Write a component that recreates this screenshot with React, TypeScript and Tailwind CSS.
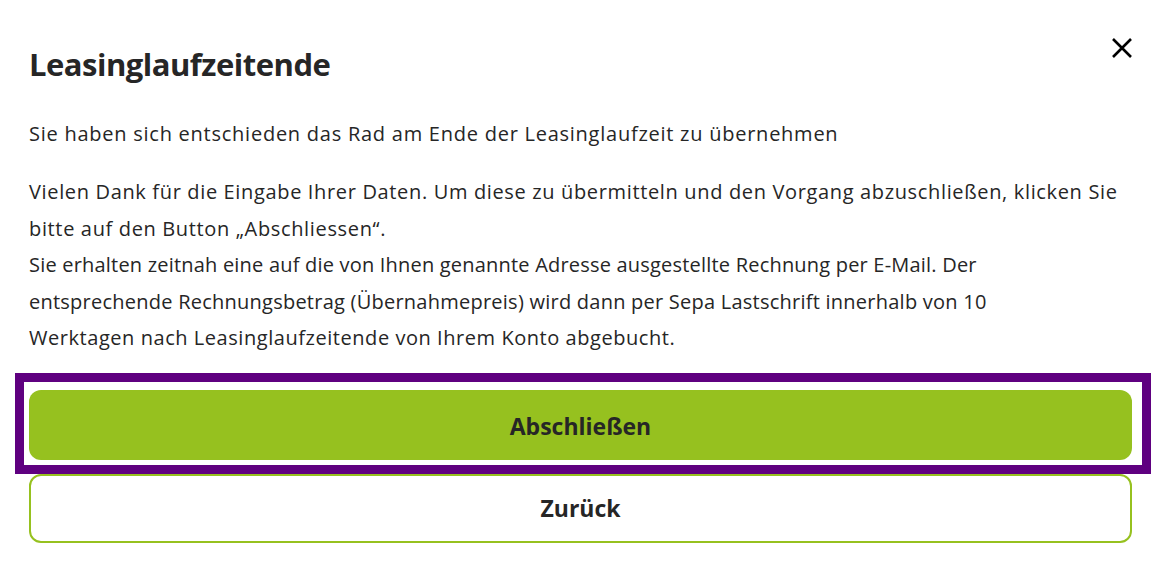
import React from "react";

export default function App() {
  return (
    <div
      className="w-[1168px] h-[576px] bg-white text-[#262626] overflow-hidden"
      style={{ fontFamily: "'Open Sans', 'Liberation Sans', sans-serif" }}
    >
      <div className="pl-[29px] pr-[36px] pt-[38px]">
        <div className="flex items-start justify-between">
          <h1 className="mt-[6px] text-[31px] leading-[40px] font-bold tracking-[-0.5px]">
            Leasinglaufzeitende
          </h1>
          <button className="w-[22px] h-[20px] mr-[-1px] flex items-center justify-center" aria-label="close">
            <svg width="22" height="20" viewBox="0 0 22 20">
              <path d="M2 1 L20 19 M20 1 L2 19" stroke="#000" strokeWidth="2.6" strokeLinecap="butt" />
            </svg>
          </button>
        </div>
        <p className="mt-[32px] text-[20px] leading-[36px] tracking-[0.75px] whitespace-nowrap">
          Sie haben sich entschieden das Rad am Ende der Leasinglaufzeit zu übernehmen
        </p>
        <p className="mt-[22px] text-[20px] leading-[36.5px] tracking-[0.65px] whitespace-nowrap">
          Vielen Dank für die Eingabe Ihrer Daten. Um diese zu übermitteln und den Vorgang abzuschließen, klicken Sie
          <br />
          bitte auf den Button „Abschliessen“.
          <br />
          <span className="tracking-[0.2px]">
            Sie erhalten zeitnah eine auf die von Ihnen genannte Adresse ausgestellte Rechnung per E-Mail. Der
          </span>
          <br />
          <span className="tracking-[0.24px]">
            entsprechende Rechnungsbetrag (Übernahmepreis) wird dann per Sepa Lastschrift innerhalb von 10
          </span>
          <br />
          <span className="tracking-[0.55px]">Werktagen nach Leasinglaufzeitende von Ihrem Konto abgebucht.</span>
        </p>
        <div className="mt-[16px] ml-[-14px] mr-[-19px] border-[9px] border-[#5f0080] pt-[8px] pl-[5px] pr-[10px] pb-[5px]">
          <button className="w-full h-[70px] pt-[3px] rounded-[12px] bg-[#96c11f] text-[23px] font-bold text-[#262626]">
            Abschließen
          </button>
        </div>
        <button className="w-full h-[69px] rounded-[12px] border-[2.5px] border-[#96c11f] bg-white text-[23px] font-bold text-[#262626]">
          Zurück
        </button>
      </div>
    </div>
  );
}
